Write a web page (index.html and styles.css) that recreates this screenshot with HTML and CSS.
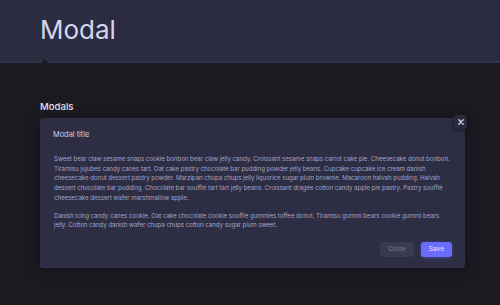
FILE: index.html
```html
<!DOCTYPE html>
<html lang="en">
<head>
    <meta charset="UTF-8">
    <title>Modal</title>
    <link rel="stylesheet" href="styles.css">
</head>
<body>
    <header class="page-header">
        <h1>Modal</h1>
        <span class="notch"></span>
    </header>
    <main class="content">
        <h2 class="section-title">Modals</h2>
        <div class="modal">
            <button class="modal-close" aria-label="Close">
                <svg width="6" height="6" viewBox="0 0 6 6"><path d="M0.8 0.8L5.2 5.2M5.2 0.8L0.8 5.2" stroke="#d8d8ea" stroke-width="1.3" stroke-linecap="round"/></svg>
            </button>
            <div class="modal-header">Modal title</div>
            <div class="modal-body">
                <p>Sweet bear claw sesame snaps cookie bonbon bear claw jelly candy. Croissant sesame snaps carrot cake pie. Cheesecake donut bonbon. Tiramisu jujubes candy canes tart. Oat cake pastry chocolate bar pudding powder jelly beans. Cupcake cupcake ice cream danish cheesecake donut dessert pastry powder. Marzipan chupa chups jelly liquorice sugar plum brownie. Macaroon halvah pudding. Halvah dessert chocolate bar pudding. Chocolate bar soufflé tart tart jelly beans. Croissant dragée cotton candy apple pie pastry. Pastry soufflé cheesecake dessert wafer marshmallow apple.</p>
                <p>Danish icing candy canes cookie. Oat cake chocolate cookie soufflé gummies toffee donut. Tiramisu gummi bears cookie gummi bears jelly. Cotton candy danish wafer chupa chups cotton candy sugar plum sweet.</p>
            </div>
            <div class="modal-footer">
                <button class="btn btn-close">Close</button>
                <button class="btn btn-save">Save</button>
            </div>
        </div>
    </main>
</body>
</html>
```

FILE: styles.css
```css
body {
    margin: 0;
    background: #1b1a21;
    font-family: Inter, "Noto Sans", sans-serif;
    width: 500px;
    height: 305px;
    overflow: hidden;
}
.page-header {
    position: relative;
    height: 61px;
    background: #2b2c40;
    border-bottom: 2px solid #30314a;
    padding-left: 40px;
}
.page-header h1 {
    margin: 0;
    padding-top: 14px;
    font-size: 26px;
    font-weight: 400;
    color: #d4d5ee;
}
.notch {
    position: absolute;
    left: 41px;
    bottom: -2px;
    width: 0;
    height: 0;
    border-left: 4px solid transparent;
    border-right: 4px solid transparent;
    border-bottom: 4px solid #1b1a21;
}
.content {
    padding: 38px 35px 0 40px;
}
.section-title {
    margin: 0 0 6px;
    font-size: 9.6px;
    font-weight: 500;
    color: #e2e3f0;
}
.modal {
    position: relative;
    width: 425px;
    background: #2d2d44;
    border-radius: 3px;
    box-shadow: 0 2px 12px rgba(0, 0, 0, 0.35);
}
.modal-close {
    position: absolute;
    top: -3px;
    right: -2px;
    width: 13px;
    height: 14px;
    padding: 0;
    border: none;
    border-radius: 3px;
    background: #2a2a3e;
    box-shadow: 0 1px 5px rgba(0, 0, 0, 0.5);
    display: flex;
    align-items: center;
    justify-content: center;
}
.modal-header {
    padding: 12px 13px 0;
    font-size: 7.4px;
    color: #cfd0e6;
}
.modal-body {
    padding: 15px 12px 0 14px;
    font-size: 6.2px;
    letter-spacing: -0.07px;
    line-height: 9.7px;
    color: #a3a4c6;
}
.modal-body p {
    margin: 0 0 8px;
}
.modal-footer {
    display: flex;
    justify-content: flex-end;
    gap: 7px;
    padding: 4px 13px 11px;
}
.btn {
    font-family: inherit;
    font-size: 6.6px;
    height: 15px;
    padding: 0 8px;
    border: none;
    border-radius: 3px;
}
.btn-close {
    background: #393a50;
    color: #7e7f98;
}
.btn-save {
    background: #696cff;
    color: #e8e9ff;
    box-shadow: 0 1px 4px rgba(105, 108, 255, 0.4);
}
```
